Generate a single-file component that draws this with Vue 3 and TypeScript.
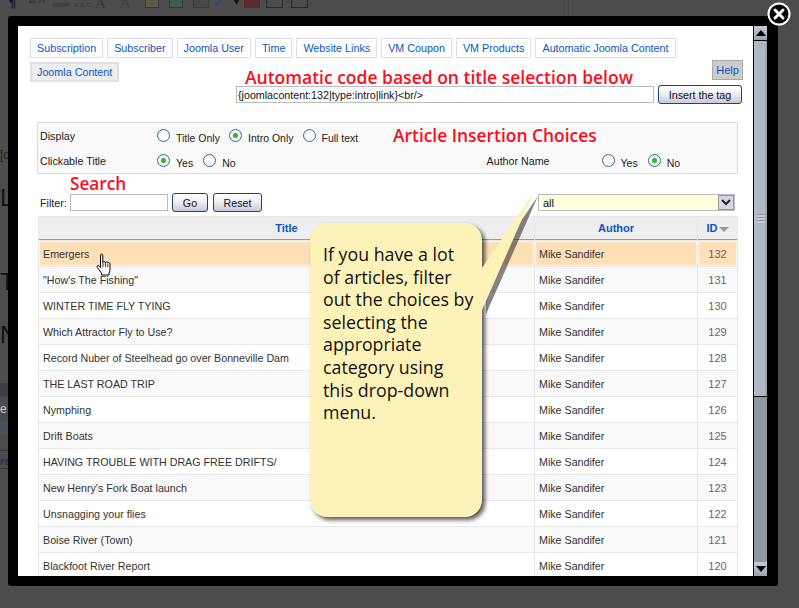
<script setup lang="ts">
interface Row { title: string; author: string; id: number }
const tabs: string[] = ['Subscription', 'Subscriber', 'Joomla User', 'Time', 'Website Links', 'VM Coupon', 'VM Products', 'Automatic Joomla Content']
const titles: string[] = [
  'Emergers', '"How\'s The Fishing"', 'WINTER TIME FLY TYING', 'Which Attractor Fly to Use?',
  'Record Nuber of Steelhead go over Bonneville Dam', 'THE LAST ROAD TRIP', 'Nymphing', 'Drift Boats',
  'HAVING TROUBLE WITH DRAG FREE DRIFTS/', "New Henry's Fork Boat launch", 'Unsnagging your flies',
  'Boise River (Town)', 'Blackfoot River Report'
]
const rows: Row[] = titles.map((title, i) => ({ title, author: 'Mike Sandifer', id: 132 - i }))
const calloutLines: string[] = ['If you have a lot', 'of articles, filter', 'out the choices by', 'selecting the', 'appropriate', 'category using', 'this drop-down', 'menu.']
</script>

<template>
  <div class="screen">
    <div class="behind">
      <div class="toolbar">
        <span class="tb pil">¶</span>
        <span class="tb quote">“”</span>
        <span class="tb abbr">ABBR</span>
        <span class="tb abbr two">A.B.C.</span>
        <span class="tb big">A</span>
        <span class="tb big green">A</span>
        <span class="tb-icon note"></span>
        <span class="tb-icon pic"></span>
        <span class="tb-icon gray"></span>
        <span class="tb check">✔</span>
        <span class="tb caret">▾</span>
        <span class="tb-icon redd"></span>
        <span class="tb-icon box"></span>
        <span class="tb-icon box two"></span>
        <span class="vlines"></span>
      </div>
      <div class="frag small">[d</div>
      <div class="frag large l1">L</div>
      <div class="frag large l2">T</div>
      <div class="frag large l3">N</div>
      <div class="frag strip"></div>
      <div class="frag small e">e</div>
      <div class="frag thumb"></div>
      <div class="frag rule"></div>
      <div class="frag rs">rs</div>
      <div class="frag rule r2"></div>
    </div>

    <div class="modal">
      <div class="panel">
        <div class="content">
          <div class="tabs">
            <a v-for="t in tabs" :key="t" class="tab">{{ t }}</a>
            <a class="tab active">Joomla Content</a>
          </div>

          <div class="tag-row">
            <input class="tag-input" type="text" value="{joomlacontent:132|type:intro|link}<br/>" readonly />
            <button class="btn insert">Insert the tag</button>
          </div>

          <div class="options">
            <div class="opt-row first">
              <span class="opt-label">Display</span>
              <span class="radio"></span><span class="r-text">Title Only</span>
              <span class="radio on"></span><span class="r-text">Intro Only</span>
              <span class="radio"></span><span class="r-text">Full text</span>
            </div>
            <div class="opt-row">
              <span class="opt-label">Clickable Title</span>
              <span class="radio on"></span><span class="r-text yes">Yes</span>
              <span class="radio"></span><span class="r-text">No</span>
              <span class="author-label">Author Name</span>
              <span class="radio"></span><span class="r-text yes">Yes</span>
              <span class="radio on"></span><span class="r-text">No</span>
            </div>
          </div>

          <div class="filter-row">
            <span class="filter-label">Filter:</span>
            <input class="filter-input" type="text" />
            <button class="btn go">Go</button>
            <button class="btn reset">Reset</button>
            <div class="select">
              <span>all</span>
              <svg class="sel-btn" width="16" height="15" viewBox="0 0 16 15">
                <rect x="0.5" y="0.5" width="15" height="14" fill="#d6d6e6" stroke="#999" />
                <path d="M4 5l4 4 4-4" fill="none" stroke="#222" stroke-width="2" />
              </svg>
            </div>
          </div>

          <table class="list">
            <thead>
              <tr>
                <th class="c-title">Title</th>
                <th class="c-author">Author</th>
                <th class="c-id">ID<i class="sort"></i></th>
              </tr>
            </thead>
            <tbody>
              <tr v-for="(r, i) in rows" :key="r.id" :class="{ alt: i % 2 === 1, hover: i === 0 }">
                <td class="c-title">{{ r.title }}</td>
                <td class="c-author">{{ r.author }}</td>
                <td class="c-id">{{ r.id }}</td>
              </tr>
            </tbody>
          </table>
        </div>

        <a class="help">Help</a>
        <div class="note-red n1">Automatic code based on title selection below</div>
        <div class="note-red n2">Article Insertion Choices</div>
        <div class="note-red n3">Search</div>

        <svg class="hand" width="19" height="25" viewBox="0 0 17 25">
          <path d="M4.500 2.200c0-1.500 2.300-1.500 2.300 0v7.300c.2-1.300 2.400-1.300 2.500.2.300-1.100 2.300-1 2.400.4.400-.9 2.300-.6 2.300.9v5.500c0 1.400-.5 2.300-1 3.500v2H5.500v-1.800L1.200 14.300c-.8-1.300.8-2.500 1.900-1.500l1.400 1.700z" fill="#fff" stroke="#000" stroke-width="1" stroke-linejoin="round" />
          <path d="M7 10v4M9.400 10v4M11.800 11v3" stroke="#000" stroke-width=".8" fill="none" />
        </svg>

        <div class="callout">
          <svg class="tail" width="60" height="130" viewBox="0 0 60 130">
            <path d="M0 78 L52 2 L0 120 Z" fill="#333" opacity=".6" transform="translate(4 4)" />
            <path d="M0 78 L52 2 L0 120 Z" fill="#fdf3b8" />
          </svg>
          <p><span v-for="line in calloutLines" :key="line" class="c-line">{{ line }}</span></p>
        </div>
      </div>

      <div class="scrollbar">
        <div class="sb-btn"><i class="up"></i></div>
        <div class="thumb-bar"><span class="grip"></span></div>
        <div class="track"></div>
        <div class="sb-btn"><i class="down"></i></div>
      </div>
    </div>

    <svg class="close" width="26" height="26" viewBox="0 0 26 26">
      <circle cx="13" cy="13" r="10.500" fill="#000" stroke="#fff" stroke-width="2" />
      <path d="M9 9l8 8M17 9l-8 8" stroke="#fff" stroke-width="3" stroke-linecap="round" />
    </svg>
  </div>
</template>

<style>
html, body { margin: 0; padding: 0; background: #4c4c4c; }
</style>

<style scoped>
.screen {
  position: relative;
  width: 799px;
  height: 608px;
  overflow: hidden;
  background: #4c4c4c;
  font-family: "Liberation Sans", Arial, sans-serif;
  font-size: 11px;
  color: #222;
}

/* page dimmed behind the modal */
.behind { height: 608px; overflow: hidden; }
.toolbar {
  position: relative;
  height: 16px;
  display: flex;
  align-items: flex-start;
  color: #2a2a2a;
  overflow: hidden;
}
.tb { display: block; line-height: 10px; margin-top: -2px; }
.pil { margin-left: 9px; font-size: 13px; font-weight: bold; color: #111; width: 19px; }
.quote { font-size: 18px; font-weight: bold; color: #3a3a3a; width: 24px; line-height: 14px; }
.abbr { font-size: 6px; font-weight: bold; color: #383838; width: 22px; line-height: 8px; margin-top: 1px; }
.abbr.two { width: 21px; }
.big { font-size: 15px; font-family: "Liberation Serif", serif; width: 25px; color: #3a3a3a; line-height: 12px; margin-top: -3px; }
.green { color: #2d4a32; }
.tb-icon { display: block; width: 14px; height: 8px; margin-right: 10px; border: 1px solid #2b3a48; border-top: 0; box-sizing: border-box; }
.note { background: #5d5a46; }
.pic { background: #3f5a4a; }
.gray { border-color: #3b3b3b; margin-right: 4px; width: 16px; background: #484848; }
.check { font-size: 13px; color: #25496e; width: 21px; line-height: 9px; }
.caret { font-size: 10px; color: #111; width: 10px; line-height: 8px; }
.redd { background: #5a2d2d; border-color: #6d2020; margin-right: 6px; width: 16px; }
.box { width: 17px; border-color: #1e2b38; margin-right: 8px; }
.vlines { position: absolute; left: 563px; top: 0; width: 4px; height: 16px; border-left: 1px solid #444; border-right: 1px solid #444; }

.frag { width: 8px; overflow: hidden; color: #111; }
.small { margin-top: 131px; height: 16px; font-size: 12px; line-height: 16px; color: #222; }
.large { font-size: 24px; line-height: 20px; height: 20px; white-space: nowrap; }
.l1 { margin-top: 25px; }
.l2 { margin-top: 64px; }
.l3 { margin-top: 33px; width: 8px; }
.strip { margin-top: 38px; height: 14px; background: #3b4048; }
.e { margin-top: 4px; color: #ccc; }
.thumb { margin-top: 5px; height: 12px; background: #47535c; }
.rule { margin-top: 16px; height: 1px; background: #373737; }
.rs { margin-top: 4px; height: 12px; font-size: 11px; line-height: 12px; font-weight: bold; color: #1d3550; }
.r2 { margin-top: 1px; }

/* modal */
.modal {
  position: absolute;
  left: 8px;
  top: 16px;
  width: 770px;
  height: 570px;
  box-sizing: border-box;
  padding: 10px 11px 10px 10px;
  background: #000;
  border-radius: 3px;
  display: flex;
}
.panel {
  position: relative;
  flex: 0 0 735px;
  height: 550px;
  background: #fff;
  overflow: hidden;
}
.content { padding: 12px 0 0 12px; }

.tabs { display: flex; flex-wrap: wrap; gap: 4px; width: 660px; }
.tab {
  display: block;
  box-sizing: border-box;
  height: 20px;
  line-height: 18px;
  padding: 0 6px;
  border: 1px solid #dcdcea;
  color: #0b55c4;
  font-size: 10.750px;
  white-space: nowrap;
}
.tab.active { border: 2px solid #dfdfe9; background: #eee; line-height: 16px; padding: 0 5px; }

.tag-row { display: flex; align-items: center; margin: 3px 0 0 206px; gap: 4px; }
.tag-input {
  box-sizing: border-box;
  flex: 0 0 418px;
  height: 17px;
  padding: 0 1px;
  border: 1px solid #bbb;
  font: 10.700px "Liberation Sans", Arial, sans-serif;
  color: #111;
  background: #fff;
  outline: none;
}
.btn {
  box-sizing: border-box;
  height: 19px;
  padding: 0;
  border: 1px solid #124a75;
  border-radius: 3px;
  background: linear-gradient(#fff, #f2f2f6 40%, #c9c9de);
  font: 10.700px "Liberation Sans", Arial, sans-serif;
  color: #111;
}
.insert { flex: 0 0 84px; }

.options {
  box-sizing: border-box;
  width: 701px;
  height: 52px;
  margin: 18px 0 0 7px;
  padding: 1px 0 0 2px;
  background: #f9f9f9;
  border: 1px solid #dcdcdc;
}
.opt-row { display: flex; align-items: center; height: 25px; }
.opt-label { width: 117px; color: #222; font-size: 10.700px; position: relative; top: -1px; }
.radio {
  box-sizing: border-box;
  width: 13px;
  height: 13px;
  border-radius: 50%;
  border: 1px solid #3a6a93;
  background: radial-gradient(circle at 60% 60%, #fff 50%, #dcdcd4);
  position: relative;
  top: -1px;
}
.radio.on { background: radial-gradient(circle, #2fb52f 0 2px, #e9f3e9 3px, #fff 4px, #dcdcd4); }
.r-text { margin: 0 9px 0 6px; color: #222; font-size: 10.500px; position: relative; top: 1px; }
.r-text.yes { margin-right: 10px; }
.author-label { margin-left: 242px; width: 115px; position: relative; top: -1px; color: #222; font-size: 10.700px; }

.filter-row { display: flex; align-items: center; height: 19px; margin: 19px 0 0 10px; }
.filter-label { width: 30px; color: #222; font-size: 10.700px; }
.filter-input { box-sizing: border-box; width: 98px; height: 17px; border: 1px solid #bbb; padding: 0; background: #fff; outline: none; }
.go { width: 36px; margin-left: 4px; }
.reset { width: 49px; margin-left: 5px; }
.select {
  box-sizing: border-box;
  display: flex;
  align-items: center;
  justify-content: space-between;
  width: 197px;
  height: 17px;
  margin-left: 276px;
  padding: 0 0 0 4px;
  border: 1px solid #bbb;
  background: #ffffdd;
  color: #111;
}
.sel-btn { display: block; }

.list {
  width: 700px;
  margin: 4px 0 0 8px;
  table-layout: fixed;
  border-collapse: separate;
  border-spacing: 1px;
  background: #e8e8e8;
}
.list th {
  height: 22px;
  padding: 0;
  background: #eee;
  border-bottom: 1px solid #999;
  color: #0b55c4;
  font-size: 11px;
  font-weight: bold;
  text-align: center;
}
.list td {
  height: 25px;
  padding: 0 4px;
  box-sizing: border-box;
  background: #fff;
  color: #333;
  font-size: 10.700px;
  white-space: nowrap;
}
.list tr.alt td { background: #f9f9f9; }
.list tr.hover td { background: #fedfb6; border: 1px solid #fdf6ea; padding: 0 3px; }
.list td.c-id { text-align: center; color: #666; font-size: 11px; }
.list th.c-author { width: 162px; }
.list th.c-id { width: 39px; }
.sort { display: inline-block; width: 0; height: 0; margin-left: 1px; border: 5px solid transparent; border-top: 5px solid #999; border-bottom: 0; vertical-align: middle; }

.help {
  position: absolute;
  left: 694px;
  top: 34px;
  box-sizing: border-box;
  width: 31px;
  height: 20px;
  line-height: 18px;
  text-align: center;
  border: 1px solid #aaa;
  background: #ccc;
  color: #0b55c4;
  font-size: 11px;
}

.note-red {
  position: absolute;
  color: #ff0c1c;
  font-family: "Open Sans", "Noto Sans", sans-serif;
  font-weight: 600;
  white-space: nowrap;
}
.n1 { left: 227px; top: 39px; font-size: 17.500px; line-height: 24px; }
.n2 { left: 375px; top: 97px; font-size: 17.400px; line-height: 24px; }
.n3 { left: 52px; top: 147px; font-size: 17.200px; line-height: 22px; }

.hand { position: absolute; left: 77px; top: 227px; }

.callout {
  position: absolute;
  left: 292px;
  top: 197px;
  box-sizing: border-box;
  width: 172px;
  height: 294px;
  padding: 20px 4px 0 13px;
  background: #fdf3b8;
  border-radius: 17px;
  box-shadow: 3px 3px 4px rgba(0, 0, 0, .65);
}
.callout p {
  position: relative;
  margin: 0;
  font-family: "Open Sans", "Noto Sans", sans-serif;
  font-size: 17.800px;
  font-weight: 500;
  line-height: 22.600px;
  color: #111;
}
.c-line { display: block; white-space: nowrap; }
.tail { position: absolute; left: 172px; top: -33px; }

/* scrollbar */
.scrollbar {
  box-sizing: border-box;
  width: 14px;
  height: 550px;
  border-left: 1px solid #000;
  display: flex;
  flex-direction: column;
}
.sb-btn {
  flex: 0 0 14px;
  display: flex;
  align-items: center;
  justify-content: center;
  background: linear-gradient(#c3cbd4, #9aa5b1);
}
.up, .down { width: 0; height: 0; border: 5px solid transparent; }
.up { border-bottom: 6px solid #000; border-top: 0; }
.down { border-top: 6px solid #000; border-bottom: 0; }
.thumb-bar {
  flex: 0 0 356px;
  margin-top: 1px;
  display: flex;
  align-items: flex-start;
  justify-content: center;
  background: linear-gradient(90deg, #bcc5cf, #aeb9c5 20%, #aeb9c5 80%, #919dab);
  border-bottom: 1px solid #000;
  box-sizing: border-box;
}
.grip { width: 8px; height: 9px; margin-top: 173px; background: repeating-linear-gradient(#8a95a1 0 1px, #c5ccd4 1px 3px); }
.track { flex: 1; background: #8f98a3; }

.close { position: absolute; left: 766px; top: 1px; }
</style>
